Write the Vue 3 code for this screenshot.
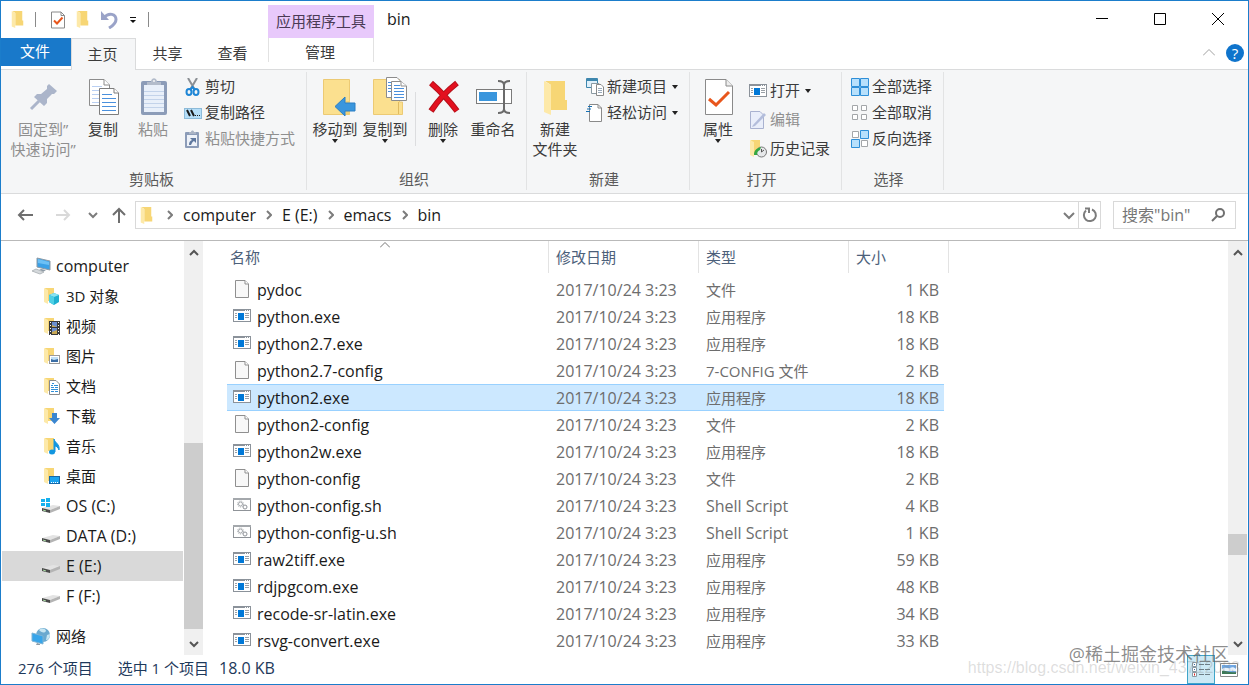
<template>
  <div class="window">
    <!-- Icon sprite -->
    <svg class="sprite" aria-hidden="true">
      <symbol id="folder" viewBox="0 0 23 34">
        <path d="M1 0H21V19H23V29H7V4z" fill="#f7d675" />
        <path d="M0 0L7 4V34L0 31z" fill="#fde9a9" />
      </symbol>
      <symbol id="check-page" viewBox="0 0 14 17">
        <path d="M.5 .5H10L13.5 4V16.5H.5z" fill="#fff" stroke="#8a8a8a" />
        <path d="M10 .5V4H13.5" fill="none" stroke="#8a8a8a" />
        <path d="M3 9L6 12L11.500 6" fill="none" stroke="#e8561c" stroke-width="2" />
      </symbol>
      <symbol id="undo" viewBox="0 0 18 18">
        <path d="M4 6.500C9 1 16 3 16 8.500C16 12 12.500 15 9 17" fill="none" stroke="#9aa3c8" stroke-width="3" />
        <path d="M1 0V9H9z" fill="#9aa3c8" />
      </symbol>

      <symbol id="pin" viewBox="0 0 48 40">
        <path d="M30 7L38 14L35 17L33 17L28 22L28 26L25 29L15 20L18 17L22 17L28 12L28 9z" fill="#abb5ca" />
        <path d="M20 24L12 32" stroke="#abb5ca" stroke-width="3" />
      </symbol>
      <symbol id="copy" viewBox="0 0 48 40">
        <g fill="#fff" stroke="#8c8c8c">
          <path d="M10.500 2.500H25L30.500 8V28.500H10.500z" />
          <path d="M25 2.500V8H30.500" />
        </g>
        <path d="M13 9.500H23M13 13.500H28M13 17.500H28M13 21.500H28M13 25.500H28" stroke="#b9cff2" />
        <g fill="#fff" stroke="#7d7d7d">
          <path d="M20.500 11.500H35L39.500 16V37.500H20.500z" />
          <path d="M35 11.500V16H39.500" />
        </g>
        <path d="M23 17.500H33M23 21.500H37M23 25.500H37M23 29.500H37M23 33.500H37" stroke="#4a90dd" />
      </symbol>
      <symbol id="paste" viewBox="0 0 48 40">
        <rect x="12" y="4" width="26" height="34" rx="2" fill="#8c9cb8" />
        <rect x="15" y="8" width="20" height="27" fill="#e9f0fa" />
        <path d="M15 14.500H35M15 18.500H35M15 22.500H35M15 26.500H35M15 30.500H35" stroke="#c3d3ea" />
        <path d="M18 8V5H22C22 0 28 0 28 5H32V8z" fill="#b3bccb" />
        <circle cx="25" cy="4" r="1" fill="#f5f6f7" />
      </symbol>
      <symbol id="move-to" viewBox="0 0 48 40">
        <path d="M12.500 2.500H38.500V37.500H12.500z" fill="#fbe08f" stroke="#ecca74" />
        <path d="M35 24h4v13.500h-4z" fill="#f1cf76" />
        <path d="M24 29.500L34 20V26H44V34H34V39z" fill="#3a96dd" stroke="#2b7fc4" />
      </symbol>
      <symbol id="copy-to" viewBox="0 0 48 40">
        <path d="M12.500 2.500H38.500V25H41.500V37.500H12.500z" fill="#fbe08f" stroke="#ecca74" />
        <path d="M37.500 25V37" stroke="#e0bb60" />
        <g fill="#fff" stroke="#8c8c8c">
          <path d="M25.500 .5H36L39.500 4V20.500H25.500z" />
          <path d="M30.500 4.500H40L45.500 9V23.500H30.500z" />
          <path d="M40 4.500V9H45.500" />
        </g>
        <path d="M27 5.500H30M27 8.500H30M27 11.500H30M27 14.500H30M33 8.500H39M33 11.500H43M33 14.500H43M33 17.500H43M33 20.500H43" stroke="#4a90dd" />
      </symbol>
      <symbol id="delete" viewBox="0 0 48 40">
        <path d="M12 6C20 13 29 22 38 34M38 6C29 13 20 22 12 34" fill="none" stroke="#b5121b" stroke-width="6" />
        <path d="M12.500 6.500C20 13 29 22 37.500 33.500M37.500 6.500C29 13 20 22 12.500 33.500" fill="none" stroke="#e3101f" stroke-width="4" />
      </symbol>
      <symbol id="rename" viewBox="0 0 48 40">
        <rect x="7.500" y="12.500" width="35" height="14" fill="#fff" stroke="#7b7b7b" />
        <rect x="10" y="15" width="18" height="9" fill="#3a96dd" />
        <path d="M29 4C33 4 35 5 35 8V32C35 35 33 36 29 36M41 4C37 4 35 5 35 8V32C35 35 37 36 41 36" fill="none" stroke="#6b6b6b" stroke-width="2" />
      </symbol>
      <symbol id="new-folder" viewBox="0 0 48 40">
        <path d="M14 4H34V23H36V33H20V8z" fill="#f7d675" />
        <path d="M13 4L20 8V38L13 35z" fill="#fde9a9" />
      </symbol>
      <symbol id="properties" viewBox="0 0 48 40">
        <path d="M11.500 2.500H32L38.500 9V37.500H11.500z" fill="#fff" stroke="#8a8a8a" />
        <path d="M32 2.500V9H38.500" fill="#eee" stroke="#8a8a8a" />
        <path d="M15 22L22 28L35 15" fill="none" stroke="#e8561c" stroke-width="3" />
      </symbol>

      <symbol id="cut" viewBox="0 0 18 18">
        <path d="M4 0L11 12M13 0L6 12" stroke="#8b8f94" stroke-width="2" />
        <g fill="none" stroke="#1f86d6" stroke-width="2">
          <ellipse cx="5" cy="14" rx="2.500" ry="3" />
          <ellipse cx="12" cy="14" rx="2.500" ry="3" />
          <path d="M6 12L8.500 9L11 12" />
        </g>
      </symbol>
      <symbol id="copy-path" viewBox="0 0 18 18">
        <rect x=".5" y="4.500" width="17" height="10" fill="#b5def8" stroke="#8dbbd9" />
        <path d="M3 6L6 12M7 6L10 12" stroke="#1b1b1b" stroke-width="2" />
        <path d="M11 11.500h1M13 11.500h1M15 11.500h1" stroke="#1b1b1b" />
      </symbol>
      <symbol id="paste-link" viewBox="0 0 18 18">
        <rect x="1" y="2" width="14" height="16" rx="1" fill="#8c9cb8" />
        <rect x="3" y="5" width="10" height="11" fill="#eef2f9" />
        <path d="M5 4V2H7C7 0 10 0 10 2H12V4z" fill="#aab4c5" />
        <path d="M5 15C5 12 6 11 8 10L6 8H12V13L10 11C8 12 8 13 7 15z" fill="#5f789f" />
      </symbol>
      <symbol id="new-item" viewBox="0 0 18 18">
        <path d="M.5 .5H11.500V9.500H.5z" fill="#dff0fb" stroke="#3e87ae" />
        <path d="M0 2h12" stroke="#3e87ae" stroke-width="2" />
        <path d="M5.500 5.500H13V15.500H5.500z" fill="#fff" stroke="#8a9aa3" />
        <path d="M10.500 6.500H15L17.500 9V17.500H10.500z" fill="#fff" stroke="#8a8a8a" />
        <path d="M12 10.500h4M12 12.500h4M12 14.500h4" stroke="#9ab" />
      </symbol>
      <symbol id="easy-access" viewBox="0 0 18 18">
        <path d="M3.500 .5H12L15.500 4V17.500H3.500z" fill="#fff" stroke="#8a8a8a" />
        <path d="M12 .5V4H15.500" fill="none" stroke="#8a8a8a" />
        <path d="M2 2.500H6M1 5H5M0 7.500H4" stroke="#1670b4" stroke-width="1" />
      </symbol>
      <symbol id="program" viewBox="0 0 18 18">
        <rect x=".5" y="2.500" width="17" height="12" fill="#fff" stroke="#8b929a" />
        <path d="M0 3H18" stroke="#8b929a" stroke-width="2" />
        <path d="M12 3.500h1M14 3.500h1M16 3.500h1" stroke="#fff" />
        <rect x="5" y="6" width="6" height="7" fill="#0078d7" />
        <path d="M2 6.500h2M2 8.500h2M2 10.500h2M12 6.500h4M12 8.500h4M12 10.500h4" stroke="#9aa0a6" />
      </symbol>
      <symbol id="edit" viewBox="0 0 18 18">
        <path d="M1.500 .5H11L14.500 4V17.500H1.500z" fill="#e9eefa" stroke="#a9b2d0" />
        <path d="M4 14L15 2L17 4L6 15L3 16z" fill="#b3bddb" />
      </symbol>
      <symbol id="history" viewBox="0 0 18 18">
        <path d="M2 0H11V15H4z" fill="#f7d675" />
        <path d="M1 0L5 2V17L1 15z" fill="#fde9a9" />
        <circle cx="12.500" cy="12" r="5" fill="#e6e8ea" stroke="#777" />
        <path d="M12.500 9V12L15 10" fill="none" stroke="#555" />
        <path d="M5 15C5 10 8 8 12 7L11 10C9 11 8 12 8 15z" fill="#35a844" />
      </symbol>
      <symbol id="select-all" viewBox="0 0 18 18">
        <path d="M.5 .5h8v8h-8zM9.500 .5h8v8h-8zM.5 9.500h8v8h-8zM9.500 9.500h8v8h-8z" fill="#b7e0fc" stroke="#2f8fd8" />
      </symbol>
      <symbol id="select-none" viewBox="0 0 18 18">
        <path d="M1.500 1.500h5v5h-5zM10.500 1.500h5v5h-5zM1.500 10.500h5v5h-5zM10.500 10.500h5v5h-5z" fill="#fff" stroke="#a3a6a9" />
      </symbol>
      <symbol id="select-invert" viewBox="0 0 18 18">
        <path d="M1.500 1.500h6v6h-6zM10.500 10.500h6v6h-6z" fill="#fff" stroke="#a3a6a9" />
        <path d="M9.500 .5h8v8h-8zM.5 9.500h8v8h-8z" fill="#b7e0fc" stroke="#2f8fd8" />
      </symbol>

      <symbol id="computer" viewBox="0 0 20 18">
        <path d="M6 1L19 4V13L6 10z" fill="#3ba0e6" stroke="#8d9aa5" />
        <path d="M7 2L18 5V8L7 6z" fill="#6cc0f5" />
        <path d="M10 12L15 13L12 15L8 13z" fill="#8d9aa5" />
        <path d="M1 14L5 12L13 15L9 17z" fill="#d5d9dc" stroke="#b4b9bd" />
      </symbol>
      <symbol id="nav-folder" viewBox="0 0 20 18">
        <path d="M4 1H13V14H7z" fill="#f7d675" />
        <path d="M3 1L7 3V17L3 15z" fill="#fde9a9" />
      </symbol>
      <symbol id="objects" viewBox="0 0 20 18">
        <use href="#nav-folder" />
        <path d="M8 8L13 6L18 8V15L13 18L8 15z" fill="#1fb0d0" />
        <path d="M8 8L13 6L18 8L13 10z" fill="#8be3f0" />
        <path d="M8 8L13 10V18L8 15z" fill="#4fd0e5" />
      </symbol>
      <symbol id="videos" viewBox="0 0 20 18">
        <use href="#nav-folder" />
        <rect x="8" y="4" width="11" height="14" fill="#3a3a3a" />
        <path d="M11 5h5v5h-5zM11 11h5v6h-5z" fill="#6c8fd0" />
        <path d="M11 8l5 2h-5zM11 15l5-2v4h-5z" fill="#c9a955" />
        <path d="M9.500 5V18M17.500 5V18" stroke="#fff" stroke-dasharray="1 2" />
      </symbol>
      <symbol id="pictures" viewBox="0 0 20 18">
        <use href="#nav-folder" />
        <rect x="8.500" y="8.500" width="10" height="8" fill="#fff" stroke="#9a9a9a" />
        <path d="M10 10h7v5h-7z" fill="#bfe0f7" />
        <path d="M10 15V12L13 13L17 12V15z" fill="#3b6ea5" />
      </symbol>
      <symbol id="documents" viewBox="0 0 20 18">
        <use href="#nav-folder" />
        <path d="M8.500 3.500H15L18.500 7V17.500H8.500z" fill="#fff" stroke="#8a8a8a" />
        <path d="M13 8.500h4M10 10.500h3M14 10.500h3M10 12.500h7M10 14.500h3M14 14.500h3M11 6.500h2M10 8.500h2" stroke="#2f8fd8" />
      </symbol>
      <symbol id="downloads" viewBox="0 0 20 18">
        <use href="#nav-folder" />
        <path d="M11 6H16V11H19L13.500 17L8 11H11z" fill="#3a86d0" />
      </symbol>
      <symbol id="music" viewBox="0 0 20 18">
        <use href="#nav-folder" />
        <path d="M13 2C14 6 19 7 18 13C17 10 15 9 14 9V15H13z" fill="#1296e0" stroke="#1296e0" />
        <ellipse cx="11" cy="15" rx="3" ry="2.500" fill="#1296e0" />
      </symbol>
      <symbol id="desktop" viewBox="0 0 20 18">
        <use href="#nav-folder" />
        <rect x="8.500" y="9.500" width="10" height="7" fill="#1aa3ef" stroke="#1668a8" />
        <path d="M10 15.500h7" stroke="#fff" stroke-dasharray="1 1" />
      </symbol>
      <symbol id="disk" viewBox="0 0 20 18">
        <path d="M1 11L12 8L19 9L9 13z" fill="#e3e3e3" />
        <path d="M9 13L19 9V12L9 16z" fill="#b4b4b4" />
        <path d="M1 11L9 13V16L1 14z" fill="#4a4a4a" />
        <path d="M2 13L5 14" stroke="#a6d8a0" />
      </symbol>
      <symbol id="os-disk" viewBox="0 0 20 18">
        <use href="#disk" />
        <path d="M0 2H4V5H0zM5 1H9V5H5zM0 6H4V9H0zM5 6H9V10H5z" fill="#16b1ee" />
      </symbol>
      <symbol id="network" viewBox="0 0 20 18">
        <circle cx="12" cy="8" r="7" fill="#6aa9cf" />
        <path d="M8 3C11 0 15 2 15 4C13 7 10 5 8 3zM16 8L19 7C19 11 17 13 15 13z" fill="#c8e6f2" />
        <path d="M1 6L12 9V17L1 14z" fill="#37a5ea" stroke="#7bb3d6" />
        <path d="M6 16L9 17V18H5z" fill="#8d9aa5" />
      </symbol>

      <symbol id="file" viewBox="0 0 18 18">
        <path d="M2.500 .5H12L15.500 4V17.500H2.500z" fill="#f8f8f8" stroke="#8f8f8f" />
        <path d="M12 .5V4H15.500" fill="#fff" stroke="#8f8f8f" />
      </symbol>
      <symbol id="script" viewBox="0 0 18 18">
        <rect x=".5" y="2.500" width="17" height="12" fill="#fff" stroke="#8f9398" />
        <path d="M0 3H18" stroke="#a4a8ac" stroke-width="2" />
        <circle cx="7.500" cy="8" r="3" fill="none" stroke="#a4a8ac" stroke-dasharray="1 1" />
        <circle cx="7.500" cy="8" r="2" fill="none" stroke="#a4a8ac" />
        <circle cx="12" cy="11" r="2" fill="#fff" stroke="#8f9398" />
      </symbol>
    </svg>

    <!-- Title bar -->
    <header class="title-bar">
      <div class="quick-access">
        <svg class="qa-folder"><use href="#folder" /></svg>
        <span class="qa-line"></span>
        <button class="qa-btn" aria-label="属性"><svg class="qa-check"><use href="#check-page" /></svg></button>
        <button class="qa-btn" aria-label="新建文件夹"><svg class="qa-folder"><use href="#folder" /></svg></button>
        <button class="qa-btn" aria-label="撤消"><svg class="qa-undo"><use href="#undo" /></svg></button>
        <button class="qa-btn" aria-label="自定义快速访问工具栏">
          <svg class="qa-more" viewBox="0 0 8 8"><path d="M1 1.500H7" stroke="#111" /><path d="M1 4H7L4 7z" fill="#111" /></svg>
        </button>
        <span class="qa-line last"></span>
      </div>
      <div class="context-title">应用程序工具</div>
      <h1 class="title">bin</h1>
      <div class="win-controls">
        <button aria-label="最小化"><svg viewBox="0 0 12 12"><path d="M0 5.500H12" stroke="#000" /></svg></button>
        <button aria-label="最大化"><svg viewBox="0 0 12 12"><path d="M.5 .5H11.500V11.500H.5z" fill="none" stroke="#000" /></svg></button>
        <button aria-label="关闭"><svg viewBox="0 0 12 12"><path d="M0 0L12 12M12 0L0 12" stroke="#000" /></svg></button>
      </div>
    </header>

    <!-- Tabs -->
    <nav class="tabs">
      <button class="tab file-tab">文件</button>
      <button
        v-for="tab in tabs"
        :key="tab"
        class="tab"
        :class="{ active: tab === activeTab }"
        @click="activeTab = tab"
      >{{ tab }}</button>
      <button class="tab context-tab">管理</button>
      <div class="tabs-right">
        <button class="collapse" aria-label="最小化功能区">
          <svg viewBox="0 0 12 7"><path d="M0 6.500L6 .5L12 6.500" fill="none" stroke="#a0a0a0" /></svg>
        </button>
        <button class="help" aria-label="帮助">?</button>
      </div>
    </nav>

    <!-- Ribbon -->
    <section class="ribbon">
      <div v-for="group in groups" :key="group.label" class="group" :class="{ narrow: !group.small }">
        <div class="group-items">
          <template v-for="item in group.large" :key="item.icon">
            <span v-if="item.split" class="split"></span>
            <button class="large-btn" :class="{ wide: item.wide }" :disabled="item.disabled">
              <svg><use :href="'#' + item.icon" /></svg>
              <span v-for="line in item.lines" :key="line">{{ line }}</span>
              <i v-if="item.menu" class="arrow"></i>
            </button>
          </template>
          <div v-if="group.small" class="small-col" :class="{ loose: group.loose }">
            <button v-for="item in group.small" :key="item.icon" class="small-btn" :disabled="item.disabled">
              <svg><use :href="'#' + item.icon" /></svg>
              <span>{{ item.label }}</span>
              <i v-if="item.menu" class="arrow"></i>
            </button>
          </div>
        </div>
        <div class="group-label">{{ group.label }}</div>
      </div>
    </section>

    <!-- Address row -->
    <div class="address-row">
      <button class="nav-btn back" aria-label="后退">
        <svg viewBox="0 0 16 16"><path d="M16 8H2M7 3L2 8L7 13" fill="none" stroke="#6e6e6e" stroke-width="2" /></svg>
      </button>
      <button class="nav-btn forward" aria-label="前进">
        <svg viewBox="0 0 16 16"><path d="M1 8H14M9 3L14 8L9 13" fill="none" stroke="#d9d9d9" stroke-width="2" /></svg>
      </button>
      <button class="nav-btn recent" aria-label="最近浏览的位置">
        <svg viewBox="0 0 16 16"><path d="M4 6L8 10L12 6" fill="none" stroke="#7c7c7c" stroke-width="2" /></svg>
      </button>
      <button class="nav-btn up" aria-label="上移">
        <svg viewBox="0 0 16 16"><path d="M8 16V2M2 8L8 2L14 8" fill="none" stroke="#6e6e6e" stroke-width="2" /></svg>
      </button>
      <div class="address">
        <svg class="address-folder"><use href="#folder" /></svg>
        <template v-for="part in path" :key="part">
          <svg class="crumb-arrow" viewBox="0 0 6 10"><path d="M1 1L5 5L1 9" fill="none" stroke="#7c7c7c" stroke-width="2" /></svg>
          <a href="#" class="crumb" @click.prevent>{{ part }}</a>
        </template>
        <button class="address-btn drop" aria-label="以前的位置">
          <svg viewBox="0 0 16 16"><path d="M3 6L8 11L13 6" fill="none" stroke="#7c7c7c" stroke-width="2" /></svg>
        </button>
        <button class="address-btn refresh" aria-label="刷新">
          <svg viewBox="0 0 16 16"><path d="M10 2.500A6 6 0 1 1 4 3.500M3 1.500H7V6" fill="none" stroke="#7c7c7c" stroke-width="2" /></svg>
        </button>
      </div>
      <label class="search">
        <input v-model="keyword" type="text" placeholder="搜索&quot;bin&quot;" aria-label="搜索" />
        <svg viewBox="0 0 14 14"><circle cx="9" cy="5" r="4" fill="none" stroke="#707070" stroke-width="2" /><path d="M6 8L1 13" stroke="#707070" stroke-width="2" /></svg>
      </label>
    </div>

    <!-- Content -->
    <main class="content">
      <nav class="tree">
        <a
          v-for="node in tree"
          :key="node.label"
          href="#"
          class="node"
          :class="{ root: node.root, network: node.icon === 'network', current: node.label === currentNode }"
          @click.prevent="currentNode = node.label"
        >
          <svg><use :href="'#' + node.icon" /></svg>
          <span :class="{ latin: isLatin(node.label) }">{{ node.label }}</span>
        </a>
      </nav>
      <div v-for="bar in scrollbars" :key="bar.name" class="scrollbar" :class="bar.name">
        <button aria-label="向上滚动"><svg viewBox="0 0 10 7"><path d="M1 6L5 2L9 6" fill="none" stroke="#555" stroke-width="2" /></svg></button>
        <div class="track">
          <div class="thumb" :style="{ top: bar.top + '%', height: bar.size + '%' }"></div>
        </div>
        <button aria-label="向下滚动"><svg viewBox="0 0 10 7"><path d="M1 1L5 5L9 1" fill="none" stroke="#555" stroke-width="2" /></svg></button>
      </div>
      <div class="list">
        <table>
          <colgroup>
            <col class="col-name" />
            <col class="col-mid" />
            <col class="col-mid" />
            <col class="col-size" />
            <col class="col-end" />
          </colgroup>
          <thead>
            <tr>
              <th class="name-head">
                名称
                <svg class="sort" viewBox="0 0 10 6"><path d="M0 5.500L5 .5L10 5.500" fill="none" stroke="#777" /></svg>
              </th>
              <th>修改日期</th>
              <th>类型</th>
              <th colspan="2">大小</th>
            </tr>
          </thead>
          <tbody>
            <tr
              v-for="file in files"
              :key="file.name"
              :class="{ selected: file.name === selected }"
              @click="selected = file.name"
            >
              <td class="name">
                <div class="name-cell">
                  <svg><use :href="'#' + file.icon" /></svg>
                  <span>{{ file.name }}</span>
                </div>
              </td>
              <td class="latin">2017/10/24 3:23</td>
              <td :class="{ latin: isLatin(file.type) }">{{ file.type }}</td>
              <td class="size latin">{{ file.size }} KB</td>
              <td class="gap"></td>
            </tr>
          </tbody>
        </table>
      </div>
    </main>

    <!-- Status bar -->
    <footer class="status">
      <span class="count">276 个项目</span>
      <span class="picked">选中 1 个项目</span>
      <span class="latin">18.0 KB</span>
      <div class="views">
        <button class="view on" aria-label="详细信息">
          <svg viewBox="0 0 18 18">
            <path d="M.5 1.500h4v4h-4zM.5 6.500h4v4h-4zM.5 11.500h4v4h-4z" fill="#fff" stroke="#8a9aa3" />
            <path d="M2 3.500h1M2 8.500h1" stroke="#3b6ea5" />
            <path d="M2 13.500h1" stroke="#d22" stroke-width="2" />
            <path d="M7 3.500h5M13 3.500h5M7 8.500h5M13 8.500h5M7 13.500h5M13 13.500h5" stroke="#6d7f88" />
          </svg>
        </button>
        <button class="view" aria-label="大缩略图">
          <svg viewBox="0 0 18 18">
            <path d="M.5 2.500h17v13H.5z" fill="#fff" stroke="#8a8a8a" />
            <path d="M2 4h14v9H2z" fill="#6fa8e6" />
            <path d="M2 8C5 5 8 8 10 7S14 6 16 8V10H2z" fill="#e7f1fb" />
            <path d="M2 13V10C6 9 8 12 16 11V13z" fill="#3b7a57" />
          </svg>
        </button>
      </div>
    </footer>

    <span class="mark-url">https://blog.csdn.net/weixin_43712083</span>
    <span class="mark-name">@稀土掘金技术社区</span>
  </div>
</template>

<script setup>
import { ref } from 'vue';

const tabs = ['主页', '共享', '查看'];
const activeTab = ref('主页');
const keyword = ref('');
const currentNode = ref('E (E:)');
const selected = ref('python2.exe');

const groups = [
  {
    label: '剪贴板',
    large: [
      { icon: 'pin', lines: ['固定到”', '快速访问”'], wide: true, disabled: true },
      { icon: 'copy', lines: ['复制'] },
      { icon: 'paste', lines: ['粘贴'], disabled: true },
    ],
    small: [
      { icon: 'cut', label: '剪切' },
      { icon: 'copy-path', label: '复制路径' },
      { icon: 'paste-link', label: '粘贴快捷方式', disabled: true },
    ],
  },
  {
    label: '组织',
    large: [
      { icon: 'move-to', lines: ['移动到'], menu: true },
      { icon: 'copy-to', lines: ['复制到'], menu: true },
      { icon: 'delete', lines: ['删除'], menu: true, split: true },
      { icon: 'rename', lines: ['重命名'] },
    ],
  },
  {
    label: '新建',
    large: [{ icon: 'new-folder', lines: ['新建', '文件夹'] }],
    small: [
      { icon: 'new-item', label: '新建项目', menu: true },
      { icon: 'easy-access', label: '轻松访问', menu: true },
    ],
  },
  {
    label: '打开',
    large: [{ icon: 'properties', lines: ['属性'], menu: true }],
    loose: true,
    small: [
      { icon: 'program', label: '打开', menu: true },
      { icon: 'edit', label: '编辑', disabled: true },
      { icon: 'history', label: '历史记录' },
    ],
  },
  {
    label: '选择',
    large: [],
    small: [
      { icon: 'select-all', label: '全部选择' },
      { icon: 'select-none', label: '全部取消' },
      { icon: 'select-invert', label: '反向选择' },
    ],
  },
];

const path = ['computer', 'E (E:)', 'emacs', 'bin'];

const tree = [
  { icon: 'computer', label: 'computer', root: true },
  { icon: 'objects', label: '3D 对象' },
  { icon: 'videos', label: '视频' },
  { icon: 'pictures', label: '图片' },
  { icon: 'documents', label: '文档' },
  { icon: 'downloads', label: '下载' },
  { icon: 'music', label: '音乐' },
  { icon: 'desktop', label: '桌面' },
  { icon: 'os-disk', label: 'OS (C:)' },
  { icon: 'disk', label: 'DATA (D:)' },
  { icon: 'disk', label: 'E (E:)' },
  { icon: 'disk', label: 'F (F:)' },
  { icon: 'network', label: '网络', root: true },
];

const files = [
  { name: 'pydoc', icon: 'file', type: '文件', size: 1 },
  { name: 'python.exe', icon: 'program', type: '应用程序', size: 18 },
  { name: 'python2.7.exe', icon: 'program', type: '应用程序', size: 18 },
  { name: 'python2.7-config', icon: 'file', type: '7-CONFIG 文件', size: 2 },
  { name: 'python2.exe', icon: 'program', type: '应用程序', size: 18 },
  { name: 'python2-config', icon: 'file', type: '文件', size: 2 },
  { name: 'python2w.exe', icon: 'program', type: '应用程序', size: 18 },
  { name: 'python-config', icon: 'file', type: '文件', size: 2 },
  { name: 'python-config.sh', icon: 'script', type: 'Shell Script', size: 4 },
  { name: 'python-config-u.sh', icon: 'script', type: 'Shell Script', size: 1 },
  { name: 'raw2tiff.exe', icon: 'program', type: '应用程序', size: 59 },
  { name: 'rdjpgcom.exe', icon: 'program', type: '应用程序', size: 48 },
  { name: 'recode-sr-latin.exe', icon: 'program', type: '应用程序', size: 34 },
  { name: 'rsvg-convert.exe', icon: 'program', type: '应用程序', size: 33 },
];

// thumb position and size in percent of the track
const scrollbars = [
  { name: 'tree-bar', top: 48.6, size: 50.3 },
  { name: 'list-bar', top: 73.2, size: 5.7 },
];

// Latin-only labels are set one pixel larger than Chinese ones
const isLatin = (text) => /^[\x20-\x7e]+$/.test(text);
</script>

<style>
body {
  margin: 0;
}
</style>

<style scoped>
.window {
  position: relative;
  display: flex;
  flex-direction: column;
  min-height: 100vh;
  box-sizing: border-box;
  border: 1px solid #1b7dcb;
  background: #fff;
  color: #1a1a1a;
  font-family: "Open Sans", "Noto Sans CJK SC", sans-serif;
  font-size: 15px;
  line-height: 20px;
  overflow: hidden;
}

.sprite {
  position: absolute;
  width: 0;
  height: 0;
}

svg {
  display: block;
  flex: none;
}

button {
  padding: 0;
  border: 0;
  background: none;
  color: inherit;
  font: inherit;
}

a {
  color: inherit;
  text-decoration: none;
}

.latin {
  font-size: 16px;
}

/* title bar */
.title-bar {
  display: flex;
  height: 37px;
}

.quick-access {
  display: flex;
  align-items: center;
  gap: 11px;
  width: 257px;
  padding-left: 10px;
}

.qa-folder {
  width: 13px;
  height: 17px;
}

.qa-line {
  width: 1px;
  height: 15px;
  margin-right: 4px;
  background: #8a8a8a;
}

.qa-line.last {
  margin: 0;
}

.qa-check {
  width: 14px;
  height: 18px;
}

.qa-undo {
  width: 18px;
  height: 18px;
}

.qa-more {
  width: 8px;
  height: 8px;
}

.context-title {
  align-self: flex-end;
  width: 106px;
  height: 33px;
  background: #e8c9fb;
  color: #4a3a55;
  line-height: 33px;
  text-align: center;
}

.title {
  margin: 0 0 0 13px;
  font-size: 16px;
  font-weight: 400;
  line-height: 36px;
}

.win-controls {
  display: flex;
  margin: 0 1px 0 auto;
}

.win-controls button {
  display: flex;
  align-items: center;
  justify-content: center;
  width: 58px;
  height: 36px;
}

.win-controls svg {
  width: 12px;
  height: 12px;
}

/* tabs */
.tabs {
  display: flex;
  height: 31px;
  border-bottom: 1px solid #dadbdc;
}

.tab {
  width: 65px;
  height: 31px;
  box-sizing: border-box;
  padding: 0 2px 2px 0;
  color: #3b3b3b;
}

.tab.file-tab {
  width: 70px;
  height: 28px;
  background: #1979ca;
  color: #fff;
}

.tab.active {
  height: 32px;
  border: 1px solid #dadbdc;
  border-bottom: 0;
  background: #f5f6f7;
}

.tab.context-tab {
  width: 106px;
  height: 24px;
  margin-left: 2px;
  padding: 4px 2px 0 0;
  border: solid #e2e2e2;
  border-width: 0 1px;
}

.tabs-right {
  display: flex;
  align-items: center;
  gap: 11px;
  margin-left: auto;
  padding: 0 4px 2px 0;
}

.collapse svg {
  width: 12px;
  height: 7px;
}

.help {
  width: 18px;
  height: 18px;
  border-radius: 50%;
  background: #0f74cc;
  color: #fff;
  line-height: 18px;
}

/* ribbon */
.ribbon {
  display: flex;
  height: 123px;
  border-bottom: 1px solid #dadbdc;
  background: #f5f6f7;
}

.group {
  display: flex;
  flex-direction: column;
  margin: 2px 0 3px;
  padding: 2px 11px 0 3px;
  border-right: 1px solid #e2e3e4;
}

.group:first-child {
  padding-left: 7px;
}

.group.narrow {
  padding-right: 8px;
}

.group-items {
  display: flex;
  flex: 1;
}

.group-label {
  height: 21px;
  color: #5a5a5a;
  text-align: center;
}

.large-btn {
  display: flex;
  flex-direction: column;
  align-items: center;
  width: 50px;
  padding-top: 3px;
  color: #3b3b3b;
  white-space: nowrap;
}

.large-btn.wide {
  width: 70px;
}

.large-btn svg {
  width: 48px;
  height: 40px;
  margin-bottom: 2px;
}

button:disabled {
  color: #8f8f8f;
}

.split {
  width: 1px;
  height: 54px;
  margin: 18px 2px 0 5px;
  background: #dcdddf;
}

.arrow {
  border: 3px solid transparent;
  border-top: 4px solid #222;
  border-bottom: 0;
}

.small-col {
  display: flex;
  flex-direction: column;
  margin-left: 6px;
}

.small-col.loose {
  padding-top: 2px;
}

.small-btn {
  display: flex;
  align-items: center;
  gap: 3px;
  height: 26px;
  color: #3b3b3b;
  white-space: nowrap;
}

.small-btn span {
  padding-bottom: 2px;
}

.loose .small-btn {
  height: 29px;
}

.small-btn svg {
  width: 18px;
  height: 18px;
}

.small-btn .arrow {
  margin-left: 2px;
}

/* address row */
.address-row {
  display: flex;
  align-items: center;
  padding: 7px 12px 11px 16px;
  border-bottom: 1px solid #b9b9b9;
}

.nav-btn svg {
  width: 16px;
  height: 16px;
}

.forward {
  margin-left: 22px;
}

.recent {
  margin-left: 14px;
}

.up {
  margin: 0 8px 0 10px;
}

.address {
  display: flex;
  flex: 1;
  align-items: center;
  height: 28px;
  box-sizing: border-box;
  border: 1px solid #d9d9d9;
}

.address-folder {
  width: 13px;
  height: 17px;
  margin: 0 14px 0 4px;
}

.crumb-arrow {
  width: 6px;
  height: 10px;
}

.crumb {
  margin: 0 10px;
  padding-bottom: 1px;
  font-size: 16px;
}

.address-btn svg {
  width: 16px;
  height: 16px;
}

.address-btn.drop {
  margin: 0 1px 0 auto;
}

.address-btn.refresh {
  height: 26px;
  padding: 0 2px 0 3px;
  border-left: 1px solid #d9d9d9;
}

.search {
  display: flex;
  align-items: center;
  width: 123px;
  height: 28px;
  box-sizing: border-box;
  margin-left: 12px;
  padding: 0 10px 0 8px;
  border: 1px solid #d9d9d9;
}

.search input {
  flex: 1;
  min-width: 0;
  padding: 0;
  border: 0;
  outline: 0;
  color: #1a1a1a;
  font: inherit;
  font-size: 16px;
}

.search input::placeholder {
  color: #767676;
  opacity: 1;
}

.search svg {
  width: 14px;
  height: 14px;
}

/* content */
.content {
  display: flex;
  flex: 1;
}

.tree {
  width: 183px;
  padding-top: 10px;
}

.node {
  display: flex;
  align-items: center;
  gap: 5px;
  height: 30px;
  margin: 0 1px;
  padding-left: 39px;
}

.node.root {
  padding-left: 29px;
}

.node.network {
  margin-top: 10px;
}

.node.current {
  background: #d9d9d9;
}

.node svg {
  width: 20px;
  height: 18px;
}

.scrollbar {
  display: flex;
  flex-direction: column;
  width: 19px;
  background: #f0f0f0;
}

.list-bar {
  order: 3;
  margin-right: 1px;
}

.scrollbar button {
  display: flex;
  align-items: center;
  justify-content: center;
  height: 22px;
}

.scrollbar svg {
  width: 10px;
  height: 7px;
}

.track {
  position: relative;
  flex: 1;
}

.thumb {
  position: absolute;
  left: 0;
  right: 0;
  background: #cdcdcd;
}

.list {
  flex: 1;
  order: 2;
  padding-left: 24px;
}

table {
  width: 722px;
  border-spacing: 0;
  table-layout: fixed;
}

.col-name {
  width: 322px;
}

.col-mid {
  width: 150px;
}

.col-size {
  width: 95px;
}

.col-end {
  width: 5px;
}

th {
  height: 32px;
  padding: 0 0 0 7px;
  border-right: 1px solid #e3e3e3;
  color: #4c607a;
  font-weight: 400;
  text-align: left;
}

.name-head {
  position: relative;
  padding-left: 3px;
}

.sort {
  position: absolute;
  top: 1px;
  left: 153px;
  width: 10px;
  height: 6px;
}

tbody::before {
  content: "";
  display: block;
  height: 3px;
}

td {
  height: 27px;
  box-sizing: border-box;
  padding: 0 0 0 7px;
  border: solid transparent;
  border-width: 1px 0;
  color: #6d6d6d;
}

td.name {
  padding-left: 6px;
  color: #1a1a1a;
  font-size: 16px;
}

.name-cell {
  display: flex;
  align-items: center;
  gap: 6px;
}

.name-cell svg {
  width: 18px;
  height: 18px;
  margin-bottom: 2px;
}

td.size {
  padding-right: 5px;
  text-align: right;
}

td.gap {
  padding: 0;
}

.selected td:not(.gap) {
  border-color: #99d1ff;
  background: #cce8ff;
}

/* status bar */
.status {
  display: flex;
  align-items: center;
  height: 29px;
  padding: 0 5px 0 17px;
  color: #1e395b;
}

.status span {
  padding-bottom: 3px;
}

.count {
  margin-right: 25px;
}

.picked {
  margin-right: 10px;
}

.views {
  display: flex;
  margin-left: auto;
}

.view {
  display: flex;
  align-items: center;
  justify-content: center;
  width: 28px;
  height: 29px;
  box-sizing: border-box;
}

.view.on {
  border: 1px solid #3fa5c9;
  background: #cce9f5;
}

.view svg {
  width: 18px;
  height: 18px;
}

/* overlaid marks */
.mark-url,
.mark-name {
  position: absolute;
  pointer-events: none;
  white-space: nowrap;
  line-height: 16px;
}

.mark-url {
  right: 8px;
  bottom: 8px;
  color: rgba(120, 120, 120, 0.25);
  font-family: "Liberation Sans", sans-serif;
  font-size: 16px;
}

.mark-name {
  right: 19px;
  bottom: 22px;
  color: rgba(90, 90, 90, 0.7);
  font-size: 18px;
}
</style>
